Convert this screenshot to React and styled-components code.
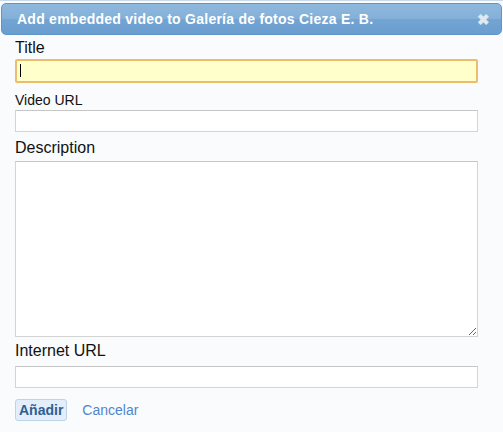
import styled, { createGlobalStyle } from "styled-components";

const GlobalStyle = createGlobalStyle`
  html, body {
    margin: 0;
    padding: 0;
    background: #f9fbfc;
    font-family: "Liberation Sans", Arial, sans-serif;
  }
`;

const Dialog = styled.div`
  width: 503px;
  height: 432px;
  box-sizing: border-box;
  border-top: 1px solid #c9d9e8;
  padding: 2px 1px 0 1px;
`;

const TitleBar = styled.div`
  height: 32px;
  box-sizing: border-box;
  display: flex;
  align-items: center;
  justify-content: space-between;
  padding: 0 11px 0 15px;
  border: 1px solid #5f95c9;
  border-radius: 5px;
  background: linear-gradient(#8fb8dd 0%, #84b0d9 48%, #72a4d3 52%, #6a9ecf 100%);
  color: #fff;
`;

const Heading = styled.span`
  font-size: 14px;
  font-weight: bold;
  letter-spacing: 0.25px;
`;

const Close = styled.span`
  font-size: 15px;
  font-weight: bold;
  color: #dde9f5;
  line-height: 1;
`;

const Form = styled.form`
  padding: 0 0 0 14px;
  display: flex;
  flex-direction: column;
`;

const Label = styled.label`
  display: block;
  color: #111;
  font-size: ${(p) => p.$size || 16}px;
  line-height: ${(p) => (p.$size || 16) + 2}px;
  margin-top: ${(p) => p.$top || 0}px;
  margin-bottom: ${(p) => p.$gap || 2}px;
`;

const Field = styled.input`
  display: block;
  width: 463px;
  height: 22px;
  box-sizing: border-box;
  margin: 0;
  border: 1px solid #d4d4d4;
  border-top-color: #c6c6c6;
  background: #fff;
  font-family: inherit;
  font-size: 14px;
  outline: none;
`;

const Focused = styled.div`
  position: relative;
  width: 463px;

  &::after {
    content: "";
    position: absolute;
    left: 5px;
    top: 5px;
    width: 1px;
    height: 13px;
    background: #000;
  }

  ${Field} {
    height: 24px;
    border: 2px solid #ecbd6a;
    border-radius: 2px;
    background: #ffffcc;
  }
`;

const Area = styled.textarea`
  display: block;
  width: 463px;
  height: 176px;
  box-sizing: border-box;
  margin: 0;
  border: 1px solid #d4d4d4;
  border-top-color: #c6c6c6;
  background: #fff;
  resize: both;
  font-family: inherit;
  outline: none;
`;

const Actions = styled.div`
  display: flex;
  align-items: center;
  gap: 15px;
  margin-top: 11px;
`;

const Button = styled.button`
  height: 22px;
  padding: 0 3px;
  border: 1px solid #bcd3ea;
  border-radius: 3px;
  background: #e4eefa;
  color: #2f5f92;
  font-family: inherit;
  font-size: 14px;
  font-weight: bold;
  cursor: pointer;
`;

const Cancel = styled.a`
  color: #4f86cc;
  font-size: 14px;
  text-decoration: none;
  cursor: pointer;
`;

export default function App() {
  return (
    <>
      <GlobalStyle />
      <Dialog>
        <TitleBar>
          <Heading>Add embedded video to Galería de fotos Cieza E. B.</Heading>
          <Close>✖</Close>
        </TitleBar>
        <Form onSubmit={(e) => e.preventDefault()}>
          <Label $top={4}>Title</Label>
          <Focused>
            <Field type="text" />
          </Focused>
          <Label $size={14} $top={9} $gap={2}>Video URL</Label>
          <Field type="text" />
          <Label $top={7} $gap={4}>Description</Label>
          <Area />
          <Label $top={5} $gap={6}>Internet URL</Label>
          <Field type="text" />
          <Actions>
            <Button type="submit">Añadir</Button>
            <Cancel>Cancelar</Cancel>
          </Actions>
        </Form>
      </Dialog>
    </>
  );
}
